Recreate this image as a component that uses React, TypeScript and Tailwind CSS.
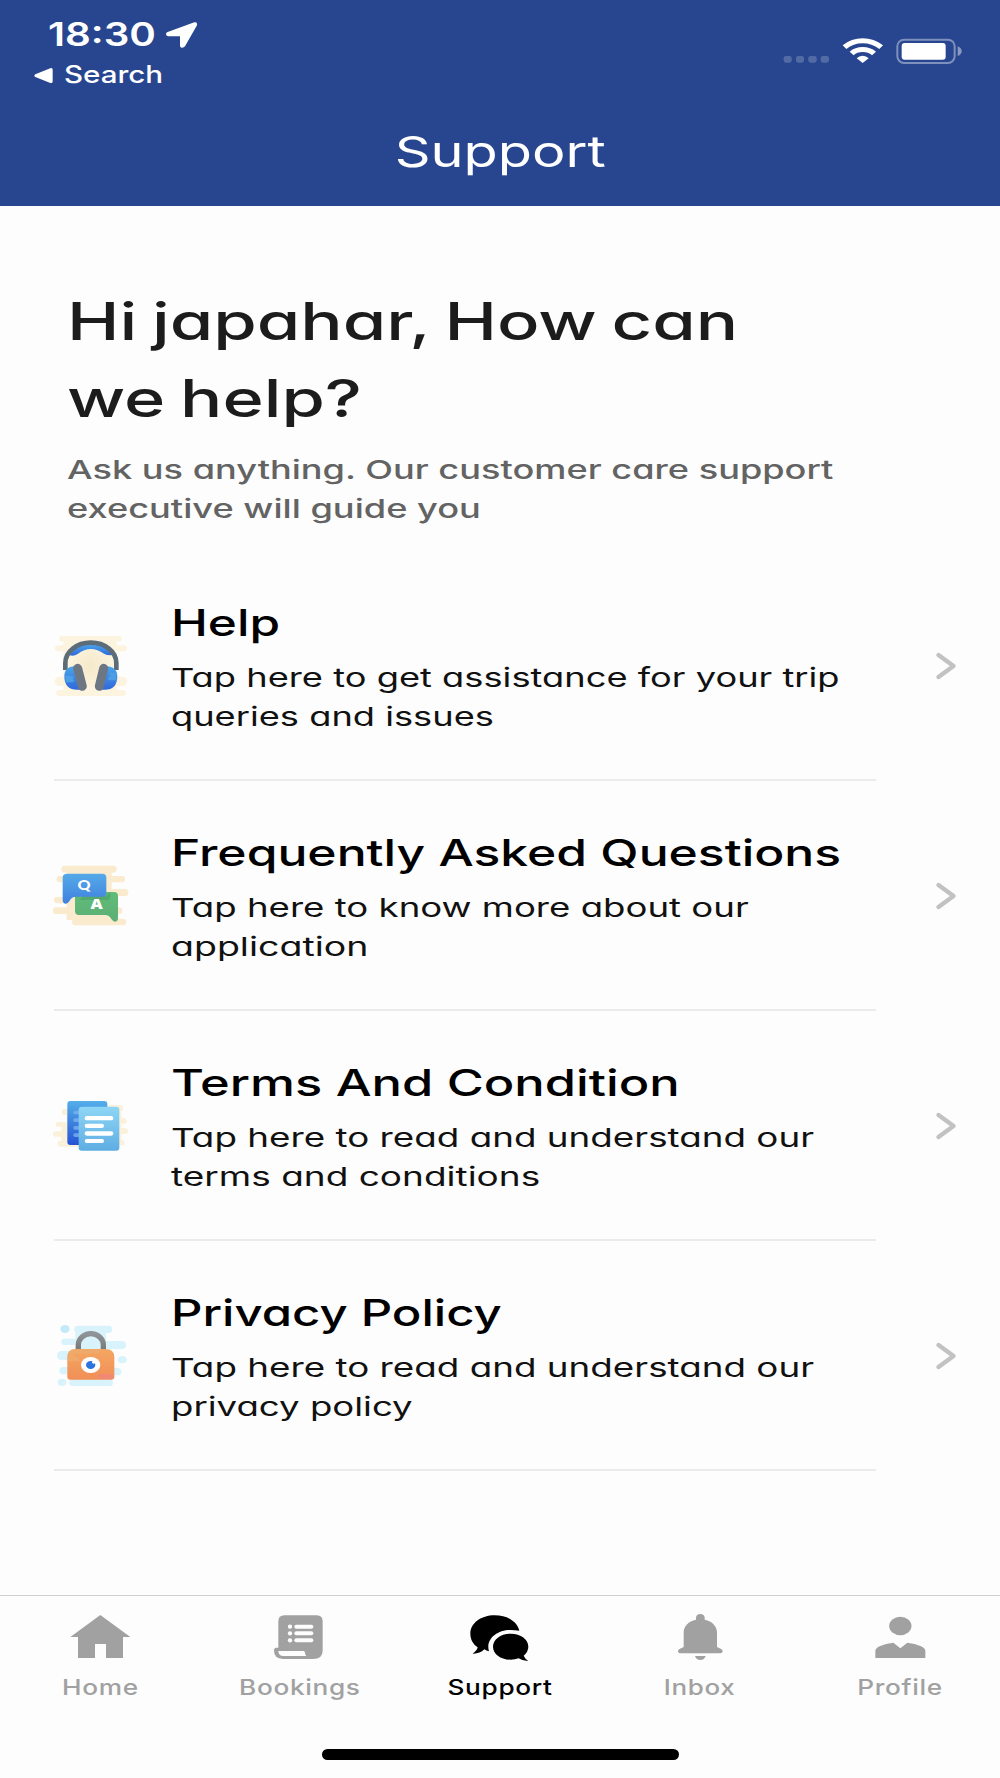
import React from "react";
import clsx from "clsx";

interface LineProps {
  scale: string;
  children: React.ReactNode;
}

// One line of wide type, stretched from its left edge
const Line: React.FC<LineProps> = ({ scale, children }) => (
  <span className={clsx("block w-max origin-left", scale)}>{children}</span>
);

const HeadphonesIcon = () => (
  <svg width="100" height="90" viewBox="0 0 300 270">
    <defs>
      <radialGradient id="hp-bg">
        <stop offset="0" stopColor="#f5e9c9" />
        <stop offset="1" stopColor="#fdf4df" />
      </radialGradient>
      <linearGradient id="hp-blue" x1="0" y1="0" x2="0" y2="1">
        <stop offset="0" stopColor="#4ba6ea" />
        <stop offset="1" stopColor="#3068dc" />
      </linearGradient>
    </defs>
    <g fill="#fdf4df">
      <rect x="58" y="48" width="188" height="16" rx="8" />
      <rect x="70" y="60" width="160" height="160" />
      <rect x="45" y="76" width="216" height="18" rx="9" />
      <rect x="44" y="170" width="217" height="28" rx="13" />
      <rect x="49" y="210" width="208" height="18" rx="9" />
    </g>
    <circle cx="152" cy="138" r="68" fill="url(#hp-bg)" />
    <path d="M82 103 Q100 72 152 72 Q204 72 223 103 Q208 109 192 101 Q152 72 113 102 Q98 112 82 103Z" fill="url(#hp-blue)" />
    <path d="M76 150 V129 A76.500 61 0 0 1 229 129 V150" fill="none" stroke="#5d6c79" strokeWidth="14" />
    <path d="M110 138 Q72 138 73 170 Q74 209 112 209 L130 209 L116 138Z" fill="url(#hp-blue)" />
    <path d="M194 138 Q232 138 232 170 Q231 209 194 209 L176 209 L189 138Z" fill="url(#hp-blue)" />
    <path d="M76 167 H94 Q104 170 98 177 Q107 184 96 187 H78Z" fill="#4a9fe6" />
    <path d="M229 158 H212 Q202 162 213 168 Q198 174 207 181 H229Z" fill="#4b9de6" />
    <path d="M113 145 L127 199" stroke="#6c7783" strokeWidth="27" strokeLinecap="round" />
    <path d="M191 145 L178 199" stroke="#6c7783" strokeWidth="27" strokeLinecap="round" />
  </svg>
);

const FaqIcon = () => (
  <svg width="100" height="90" viewBox="0 0 300 270">
    <defs>
      <linearGradient id="faq-q" x1="0" y1="0" x2="0" y2="1">
        <stop offset="0" stopColor="#55aae8" />
        <stop offset="1" stopColor="#3f80e0" />
      </linearGradient>
      <linearGradient id="faq-a" x1="0" y1="0" x2="0" y2="1">
        <stop offset="0" stopColor="#5fbc78" />
        <stop offset="1" stopColor="#5caf75" />
      </linearGradient>
    </defs>
    <g fill="#faebcf">
      <rect x="64" y="47" width="166" height="21" rx="10" />
      <rect x="50" y="78" width="205" height="19" rx="9" />
      <rect x="80" y="60" width="135" height="150" />
      <rect x="130" y="117" width="135" height="21" rx="10" />
      <rect x="42" y="141" width="100" height="19" rx="9" />
      <rect x="39" y="172" width="208" height="20" rx="10" />
      <rect x="96" y="206" width="163" height="20" rx="10" />
    </g>
    <path d="M117 126 H222 Q234 126 234 138 V205 Q234 214 226 215 Q220 216 214 207 Q207 195 196 195 H117 Q105 195 105 183 V138 Q105 126 117 126Z" fill="url(#faq-a)" />
    <path d="M130 138 H198 L211 126 V140 Q211 150 198 150 H118Z" fill="#4c9d65" opacity="0.6" />
    <path d="M81 71 H187 Q199 71 199 83 V128 Q199 140 187 140 H108 Q95 140 89 152 Q83 162 76 161 Q68 160 68 151 V83 Q68 71 81 71Z" fill="url(#faq-q)" />
    <text x="132" y="121" fontSize="42" fontWeight="900" fill="#fff" textAnchor="middle" fontFamily="Lato, sans-serif" transform="translate(132 0) scale(1.15 1) translate(-132 0)">
      Q
    </text>
    <text x="170" y="177" fontSize="42" fontWeight="800" fill="#fff" textAnchor="middle" fontFamily="Open Sans, sans-serif" transform="translate(170 0) scale(1.2 1) translate(-170 0)">
      A
    </text>
  </svg>
);

const TermsIcon = () => (
  <svg width="100" height="90" viewBox="0 0 300 270">
    <defs>
      <linearGradient id="tc-back" x1="0" y1="0" x2="0" y2="1">
        <stop offset="0" stopColor="#55aee9" />
        <stop offset="1" stopColor="#2453d4" />
      </linearGradient>
      <linearGradient id="tc-front" x1="0" y1="0" x2="0" y2="1">
        <stop offset="0" stopColor="#8fd6f5" />
        <stop offset="1" stopColor="#5eade3" />
      </linearGradient>
    </defs>
    <g fill="#fbf0d9">
      <rect x="65" y="87" width="60" height="18" rx="9" />
      <rect x="80" y="100" width="30" height="90" />
      <rect x="47" y="126" width="70" height="14" rx="7" />
      <rect x="39" y="154" width="70" height="16" rx="8" />
      <rect x="64" y="138" width="40" height="50" />
      <rect x="53" y="182" width="80" height="18" rx="9" />
      <rect x="190" y="75" width="59" height="20" rx="10" />
      <rect x="200" y="85" width="44" height="105" />
      <rect x="210" y="115" width="50" height="16" rx="8" />
      <rect x="210" y="144" width="54" height="18" rx="9" />
      <rect x="200" y="180" width="54" height="16" rx="8" />
    </g>
    <rect x="82" y="63" width="120" height="132" rx="9" fill="url(#tc-back)" />
    <g fill="#7fb5ee" opacity="0.75">
      <rect x="100" y="92" width="30" height="11" rx="5" />
      <rect x="100" y="115" width="30" height="11" rx="5" />
      <rect x="100" y="138" width="30" height="11" rx="5" />
      <rect x="100" y="160" width="30" height="11" rx="5" />
    </g>
    <rect x="116" y="80" width="122" height="132" rx="9" fill="url(#tc-front)" />
    <g fill="#fff">
      <rect x="134" y="108" width="86" height="13" rx="6.5" />
      <rect x="134" y="131" width="58" height="13" rx="6.5" />
      <rect x="134" y="154" width="86" height="13" rx="6.5" />
      <rect x="134" y="177" width="58" height="12" rx="6" />
    </g>
  </svg>
);

const PrivacyIcon = () => (
  <svg width="100" height="90" viewBox="0 0 300 270">
    <defs>
      <linearGradient id="pp-body" x1="0" y1="0" x2="0" y2="1">
        <stop offset="0" stopColor="#f5a663" />
        <stop offset="1" stopColor="#f18f57" />
      </linearGradient>
      <linearGradient id="pp-arch" x1="0" y1="0" x2="0" y2="1">
        <stop offset="0" stopColor="#909498" />
        <stop offset="1" stopColor="#777" />
      </linearGradient>
    </defs>
    <g fill="#d9f3fc">
      <ellipse cx="75" cy="57" rx="14" ry="12" fill="#c2eaf8" />
      <rect x="103" y="47" width="113" height="22" rx="10" />
      <rect x="64" y="86" width="130" height="19" rx="9" />
      <rect x="106" y="60" width="92" height="75" />
      <rect x="120" y="93" width="138" height="24" rx="12" />
      <rect x="51" y="123" width="150" height="27" rx="13" />
      <ellipse cx="247" cy="149" rx="14" ry="11" />
      <rect x="58" y="171" width="140" height="22" rx="11" />
      <rect x="130" y="174" width="114" height="22" rx="11" />
      <ellipse cx="66" cy="217" rx="13" ry="11" />
      <rect x="88" y="208" width="131" height="20" rx="10" />
    </g>
    <path d="M115 122 V104 A37.500 33 0 0 1 190 104 V122" fill="none" stroke="url(#pp-arch)" strokeWidth="16" />
    <path d="M107 117 H196 Q223 117 223 142 V200 Q223 209 213 209 H91 Q82 209 82 200 V142 Q82 117 107 117Z" fill="url(#pp-body)" />
    <path d="M83 140 Q88 119 107 118 H180 V126 Q174 134 166 130 Q160 126 155 132 H100 Q96 137 110 141 Q124 146 116 154 H83Z" fill="#efa96b" />
    <path d="M175 192 H220 V207 H182 Q173 204 175 192Z" fill="#f18874" />
    <ellipse cx="152" cy="165" rx="29" ry="24" fill="#fff" />
    <ellipse cx="152" cy="165" rx="14" ry="12" fill="#2f74dc" />
    <ellipse cx="161" cy="157" rx="5" ry="4" fill="#fff" />
  </svg>
);

const items = [
  {
    id: "help",
    Icon: HeadphonesIcon,
    title: "Help",
    titleScale: "scale-x-[1.338]",
    lines: [
      { text: "Tap here to get assistance for your trip", scale: "scale-x-[1.395]" },
      { text: "queries and issues", scale: "scale-x-[1.394]" },
    ],
  },
  {
    id: "faq",
    Icon: FaqIcon,
    title: "Frequently Asked Questions",
    titleScale: "scale-x-[1.346]",
    lines: [
      { text: "Tap here to know more about our", scale: "scale-x-[1.408]" },
      { text: "application", scale: "scale-x-[1.442]" },
    ],
  },
  {
    id: "terms",
    Icon: TermsIcon,
    title: "Terms And Condition",
    titleScale: "scale-x-[1.367]",
    lines: [
      { text: "Tap here to read and understand our", scale: "scale-x-[1.415]" },
      { text: "terms and conditions", scale: "scale-x-[1.423]" },
    ],
  },
  {
    id: "privacy",
    Icon: PrivacyIcon,
    title: "Privacy Policy",
    titleScale: "scale-x-[1.326]",
    lines: [
      { text: "Tap here to read and understand our", scale: "scale-x-[1.415]" },
      { text: "privacy policy", scale: "scale-x-[1.407]" },
    ],
  },
];

const tabs = [
  {
    label: "Home",
    scale: "scale-x-[1.22]",
    viewBox: "200 90 200 160",
    icon: <path d="M300 105 L390 171 H368 V234 H317 V192 H284 V234 H233 V171 H210Z" />,
  },
  {
    label: "Bookings",
    scale: "scale-x-[1.22]",
    viewBox: "800 90 200 160",
    icon: (
      <>
        <path
          fillRule="evenodd"
          d="M852 106 H949 Q967 106 967 124 V212 Q967 237 938 237 H848 Q821 237 821 211 Q821 203 828 203 H834 V124 Q834 106 852 106Z M834 213 H909 Q914 213 914 218 Q914 224 918 228 H850 Q834 228 834 213Z"
        />
        <g fill="#fdfdfd">
          <circle cx="869" cy="140" r="6.500" />
          <circle cx="869" cy="160" r="6.500" />
          <circle cx="869" cy="181" r="6.500" />
          <rect x="882" y="134" width="57" height="12" rx="6" />
          <rect x="882" y="154" width="57" height="12" rx="6" />
          <rect x="882" y="175" width="57" height="12" rx="6" />
        </g>
      </>
    ),
  },
  {
    label: "Support",
    scale: "scale-x-[1.22]",
    viewBox: "1400 90 200 160",
    icon: (
      <>
        <path d="M1483 106 C1523 106 1551 126 1557 152 Q1544 150 1530 150 C1494 150 1464 172 1464 200 Q1464 208 1466 214 Q1458 212 1452 208 Q1438 222 1417 221 Q1430 212 1432 202 C1418 192 1410 178 1410 161 C1410 130 1442 106 1483 106Z" />
        <path d="M1531 161 C1562 161 1584 178 1584 200 Q1584 215 1570 227 Q1574 237 1584 242 Q1568 244 1555 235 Q1544 239 1531 239 C1501 239 1478 222 1478 200 S1501 161 1531 161Z" />
      </>
    ),
  },
  {
    label: "Inbox",
    scale: "scale-x-[1.21]",
    viewBox: "500 90 200 160",
    icon: (
      <>
        <path d="M600 102 Q612 102 613 113 V119 C636 124 650 138 650 158 V201 L661 206 Q667 209 667 213 Q667 220 657 220 H543 Q533 220 533 213 Q533 209 539 206 L550 201 V158 C550 138 564 124 587 119 V113 Q588 102 600 102Z" />
        <path d="M584 228 H616 Q612 240 600 240 T584 228Z" />
      </>
    ),
  },
  {
    label: "Profile",
    scale: "scale-x-[1.22]",
    viewBox: "1100 90 200 160",
    icon: (
      <>
        <ellipse cx="1200" cy="138" rx="33.500" ry="27.500" />
        <path d="M1179 188 L1200 205 L1221 188 Q1244 190 1262 199 Q1275 205 1275 213 V234 H1125 V213 Q1125 205 1138 199 Q1156 190 1179 188Z" />
      </>
    ),
  },
];

const StatusBar = () => (
  <div className="flex h-[96px] justify-between text-white">
    <div className="pt-[14px]">
      <div className="flex h-[42px] items-center pl-[48px]">
        <span className="w-[118px] text-[32.5px] leading-[42px] font-semibold">
          <Line scale="scale-x-[1.24]">18:30</Line>
        </span>
        <svg width="32" height="26" viewBox="498 66 96 78" fill="currentColor">
          <path d="M583 67 Q593 65 591 76 L555 139 Q551 144 544 143 Q539 141 540 136 V109 H504 Q498 107 498 102 Q498 98 503 96Z" />
        </svg>
      </div>
      <div className="flex h-[38px] items-center pl-[34px]">
        <svg width="19" height="15" viewBox="103 201 57 45" fill="currentColor">
          <path d="M152 202 Q159 199 159 207 V241 Q159 248 152 246 L107 228 Q101 224 107 220Z" />
        </svg>
        <span className="ml-[11px] text-2xl leading-[38px] font-medium">
          <Line scale="scale-x-[1.23]">Search</Line>
        </span>
      </div>
    </div>
    <svg width="180" height="26" viewBox="850 112 540 78" fill="#fff" className="mt-[37.5px] mr-[37px]">
      <g opacity="0.200">
        <rect x="852" y="166" width="24" height="20" rx="7" />
        <rect x="889" y="166" width="24" height="20" rx="7" />
        <rect x="926" y="166" width="25" height="20" rx="7" />
        <rect x="963" y="166" width="25" height="20" rx="7" />
      </g>
      <path d="M1029 134 Q1055 113 1089 113 T1150 134 L1139 145 Q1117 128 1089 128 T1040 145Z" />
      <path d="M1050 153 Q1066 139 1089 139 T1129 153 L1117 164 Q1106 154 1089 154 T1062 164Z" />
      <path d="M1071 173 Q1078 165 1089 165 T1107 173 L1089 187Z" />
      <rect x="1193" y="117" width="172" height="70" rx="20" fill="none" stroke="#fff" strokeWidth="6" opacity="0.400" />
      <rect x="1206" y="127" width="132" height="50" rx="9" />
      <path d="M1374 137 Q1386 142 1386 152 T1374 166Z" opacity="0.450" />
    </svg>
  </div>
);

const App: React.FC = () => {
  const activeTab = "Support";

  return (
    <div className="flex h-[1778px] w-[1000px] flex-col overflow-hidden bg-[#fdfdfd] font-['Inter',sans-serif]">
      <header className="h-[206px] bg-[#28468f]">
        <StatusBar />
        <h1 className="flex justify-center pt-[30px] text-[43px] leading-[50px] text-white">
          <span className="scale-x-[1.3]">Support</span>
        </h1>
      </header>

      <main className="flex-1 [font-feature-settings:'cv11']">
        <div className="h-[345px] pt-[78px] pl-[67px]">
          <h2 className="text-[52px] leading-[76.600px] font-medium text-[#1c1c1c] [word-spacing:-3px]">
            <Line scale="scale-x-[1.355]">Hi japahar, How can</Line>
            <Line scale="scale-x-[1.352]">we help?</Line>
          </h2>
          <p className="mt-[13px] text-[26px] leading-[39.300px] font-medium text-[#636363]">
            <Line scale="scale-x-[1.391]">Ask us anything. Our customer care support</Line>
            <Line scale="scale-x-[1.393]">executive will guide you</Line>
          </p>
        </div>

        <ul>
          {items.map(({ id, Icon, title, titleScale, lines }) => (
            <li key={id}>
              <button className="flex h-[228px] w-full items-start pl-[40px] text-left">
                <span className="mt-[69px] w-[100px] shrink-0">
                  <Icon />
                </span>
                <span className="mt-[49px] ml-[30.5px] flex-1">
                  <span className="block text-[37px] leading-[46px] font-medium text-black">
                    <Line scale={titleScale}>{title}</Line>
                  </span>
                  <span className="mt-3 block text-[26px] leading-[39.300px] text-[#111]">
                    {lines.map((line) => (
                      <Line key={line.text} scale={line.scale}>
                        {line.text}
                      </Line>
                    ))}
                  </span>
                </span>
                <svg width="24" height="30" viewBox="0 0 24 30" className="mt-[100px] mr-[42px]">
                  <path d="M4.500 4 L19.500 15 L4.500 26" fill="none" stroke="#c2c2c2" strokeWidth="4.400" strokeLinecap="round" strokeLinejoin="round" />
                </svg>
              </button>
              <div className="ml-[54px] h-[2px] w-[822px] bg-[#ebebeb]" />
            </li>
          ))}
        </ul>
      </main>

      <nav className="h-[183px] border-t border-[#cfcfcf]">
        <div className="grid grid-cols-5">
          {tabs.map((tab) => (
            <button
              key={tab.label}
              className={clsx(
                "flex flex-col items-center pt-[14px]",
                tab.label === activeTab ? "text-black" : "text-[#a1a1a1]"
              )}
            >
              <svg width="66.670" height="53.330" viewBox={tab.viewBox} fill="currentColor">
                {tab.icon}
              </svg>
              <span className={clsx("mt-[10px] text-[21.500px] leading-7 font-medium tracking-wide", tab.scale)}>
                {tab.label}
              </span>
            </button>
          ))}
        </div>
        <div className="mx-auto mt-[48px] h-[11px] w-[357px] rounded-full bg-black" />
      </nav>
    </div>
  );
};

export default App;
